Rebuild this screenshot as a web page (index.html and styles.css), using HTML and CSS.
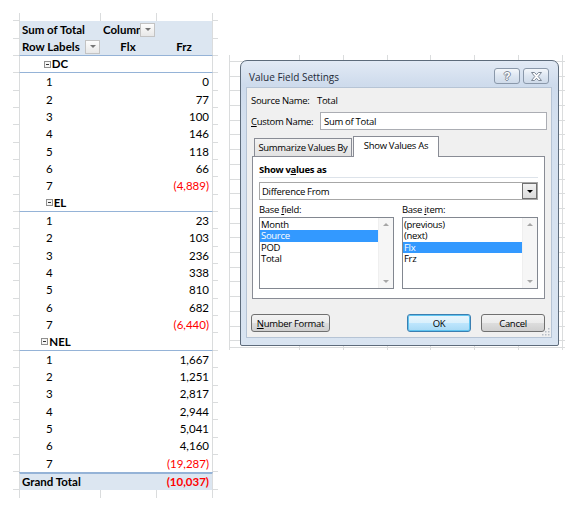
FILE: index.html
```html
<!DOCTYPE html>
<html lang="en">
<head>
<meta charset="utf-8">
<title>Value Field Settings</title>
<link rel="stylesheet" href="styles.css">
</head>
<body>
<section class="sheet">
  <div class="r edge"><span></span><span></span><span></span></div>
  <div class="r hd"><span class="lab b">Sum of Total</span><span class="colhd b"><em>Column Labels</em><i class="dd"></i></span><span></span></div>
  <div class="r hd hd2"><span class="lab b">Row Labels<i class="dd"></i></span><span class="ctr b">Flx</span><span class="ctr b">Frz</span></div>
  <div class="r sec"><span class="grp b"><i class="mn"></i>DC</span><span></span><span></span></div>
  <div class="r"><span class="it">1</span><span></span><span class="v">0</span></div>
  <div class="r"><span class="it">2</span><span></span><span class="v">77</span></div>
  <div class="r"><span class="it">3</span><span></span><span class="v">100</span></div>
  <div class="r"><span class="it">4</span><span></span><span class="v">146</span></div>
  <div class="r"><span class="it">5</span><span></span><span class="v">118</span></div>
  <div class="r"><span class="it">6</span><span></span><span class="v">66</span></div>
  <div class="r"><span class="it">7</span><span></span><span class="v neg">(4,889)</span></div>
  <div class="r sec"><span class="grp b"><i class="mn"></i>EL</span><span></span><span></span></div>
  <div class="r"><span class="it">1</span><span></span><span class="v">23</span></div>
  <div class="r"><span class="it">2</span><span></span><span class="v">103</span></div>
  <div class="r"><span class="it">3</span><span></span><span class="v">236</span></div>
  <div class="r"><span class="it">4</span><span></span><span class="v">338</span></div>
  <div class="r"><span class="it">5</span><span></span><span class="v">810</span></div>
  <div class="r"><span class="it">6</span><span></span><span class="v">682</span></div>
  <div class="r"><span class="it">7</span><span></span><span class="v neg">(6,440)</span></div>
  <div class="r sec"><span class="grp b"><i class="mn"></i>NEL</span><span></span><span></span></div>
  <div class="r"><span class="it">1</span><span></span><span class="v">1,667</span></div>
  <div class="r"><span class="it">2</span><span></span><span class="v">1,251</span></div>
  <div class="r"><span class="it">3</span><span></span><span class="v">2,817</span></div>
  <div class="r"><span class="it">4</span><span></span><span class="v">2,944</span></div>
  <div class="r"><span class="it">5</span><span></span><span class="v">5,041</span></div>
  <div class="r"><span class="it">6</span><span></span><span class="v">4,160</span></div>
  <div class="r"><span class="it">7</span><span></span><span class="v neg">(19,287)</span></div>
  <div class="r gt"><span class="lab">Grand Total</span><span></span><span class="v neg">(10,037)</span></div>
  <div class="r edge bottom"><span></span><span></span><span></span></div>
</section>

<section class="desk">
  <div class="dialog">
    <div class="titlebar">
      <span class="title">Value Field Settings</span>
      <span class="caps">
        <span class="cap help">?</span>
        <span class="cap close"><svg width="11" height="9" viewBox="0 0 11 9"><path d="M0.5 0.5h3l2 2.2 2-2.2h3l-3.3 4 3.3 4h-3l-2-2.2-2 2.2h-3l3.3-4z" fill="#fff" stroke="#7d8896" stroke-width="1"/></svg></span>
      </span>
    </div>
    <div class="client">
      <div class="line"><span class="flabel">Source Name:</span><span>Total</span></div>
      <div class="line custom"><span class="flabel wide"><u>C</u>ustom Name:</span><span class="textbox">Sum of Total</span></div>
      <div class="tabs"><span class="tab">Summarize Values By</span><span class="tab on">Show Values As</span></div>
      <div class="panel">
        <div class="gtitle">Show v<u>a</u>lues as</div>
        <div class="combo"><span>Difference From</span><span class="cbtn"></span></div>
        <div class="lists">
          <div class="lcol">
            <div class="llabel">Base <u>f</u>ield:</div>
            <div class="listbox">
              <ul><li>Month</li><li class="sel">Source</li><li>POD</li><li>Total</li></ul>
              <div class="sb"><i class="up"></i><i class="down"></i></div>
            </div>
          </div>
          <div class="lcol right">
            <div class="llabel">Base <u>i</u>tem:</div>
            <div class="listbox">
              <ul><li>(previous)</li><li>(next)</li><li class="sel">Flx</li><li>Frz</li></ul>
              <div class="sb"><i class="up"></i><i class="down"></i></div>
            </div>
          </div>
        </div>
      </div>
      <div class="btns">
        <span class="btn nf"><u>N</u>umber Format</span>
        <span class="btn ok">OK</span>
        <span class="btn">Cancel</span>
      </div>
      <svg class="grip" width="9" height="9" viewBox="0 0 9 9"><g fill="#b8bec6"><rect x="7" y="1" width="1.5" height="1.5"/><rect x="4" y="4" width="1.5" height="1.5"/><rect x="7" y="4" width="1.5" height="1.5"/><rect x="1" y="7" width="1.5" height="1.5"/><rect x="4" y="7" width="1.5" height="1.5"/><rect x="7" y="7" width="1.5" height="1.5"/></g></svg>
    </div>
  </div>
</section>
</body>
</html>
```

FILE: styles.css
```css
* { box-sizing: border-box; margin: 0; padding: 0; }
html, body { width: 578px; height: 509px; overflow: hidden; background: #fff; }
body { display: flex; align-items: flex-start; }

/* ---------- pivot sheet ---------- */
.sheet {
  margin: 13px 0 0 13px;
  width: 205px;
  font: 11.5px/1 Lato, "Liberation Sans", sans-serif;
  color: #000;
}
.r {
  display: grid;
  grid-template-columns: 6px 81px 56px 57px 5px;
  height: 17.35px;
}
.r::before, .r::after { content: ""; border-bottom: 1px solid #dadcdd; }
.r > span {
  display: flex;
  align-items: center;
  white-space: nowrap;
  overflow: hidden;
  min-width: 0;
}
.r > span:first-of-type { border-left: 1px solid #dadcdd; }
.r > span:last-of-type { border-right: 1px solid #dadcdd; }
.r.edge { height: 8.3px; }
.r.edge > span { border-left: 1px solid #dadcdd; }
.r.edge.bottom { height: 8px; }
.r.edge.bottom::before, .r.edge.bottom::after { border-bottom: 0; }

.b { font-weight: 700; }
.hd > span { background: #dce6f1; }
.hd2 > span { border-bottom: 1px solid #95b3d7; }
.lab { padding-left: 2px; }
.lab .dd { margin-left: auto; }
.colhd { padding-left: 3px; }
.colhd em { font-style: normal; overflow: hidden; flex: 1; min-width: 0; }
.colhd .dd { margin-right: 1px; }
.ctr { justify-content: center; }
.dd {
  flex: none;
  width: 15px;
  height: 14px;
  border: 1px solid #c3c3c3;
  background: linear-gradient(#fdfdfd, #e8e8e8);
  display: flex;
  align-items: center;
  justify-content: center;
}
.dd::after {
  content: "";
  border-top: 3px solid #767676;
  border-left: 3px solid transparent;
  border-right: 3px solid transparent;
}
.sec > span { border-bottom: 1px solid #95b3d7; }
.grp { justify-content: center; padding-right: 8px; }
.mn {
  width: 7px;
  height: 7px;
  margin-right: 1px;
  border: 1px solid #8f8f8f;
  background: #f6f6f6;
  display: flex;
  align-items: center;
  justify-content: center;
}
.mn::after { content: ""; width: 3px; height: 1px; background: #333; }
.it { padding-left: 26px; }
.v { justify-content: flex-end; padding-right: 3px; }
.neg { color: #ff0000; }
.gt > span { background: #dce6f1; border-top: 2px solid #95b3d7; font-weight: 700; }

/* ---------- background grid + dialog ---------- */
.desk {
  margin: 55px 0 0 10px;
  width: 337px;
  height: 296px;
  padding: 5px 0 0 12px;
  background-color: #fff;
  background-image:
    repeating-linear-gradient(to right, #dadcdd 0 1px, transparent 1px 43.83px),
    linear-gradient(#dadcdd, #dadcdd),
    repeating-linear-gradient(to bottom, #dadcdd 0 1px, transparent 1px 14.7px),
    linear-gradient(#dadcdd, #dadcdd);
  background-size: 266px 295px, 1px 295px, 336px 287px, 336px 1px;
  background-position: 71px 0, 1px 0, 1px 6px, 1px 292px;
  background-repeat: no-repeat;
}
.dialog {
  width: 319px;
  height: 286px;
  border: 1px solid #5d6b7b;
  border-radius: 7px 7px 2px 2px;
  background: linear-gradient(#e2eaf5, #cedbec 24px, #d4e0ef 60px, #d9e4f1);
  padding: 0 6px 7px 5px;
  display: flex;
  flex-direction: column;
  font: 9.5px/13px "Open Sans", "Liberation Sans", sans-serif;
  letter-spacing: -0.3px;
  color: #000;
}
.titlebar {
  height: 26px;
  flex: none;
  display: flex;
  align-items: flex-start;
  justify-content: space-between;
  padding: 0 3px;
}
.title { margin-top: 9px; font-size: 10px; line-height: 14px; letter-spacing: 0; color: #1e2a38; }
.caps { display: flex; gap: 3px; margin-top: 7px; }
.cap {
  width: 26px;
  height: 16px;
  border: 1px solid #8a98aa;
  border-radius: 3px;
  background: linear-gradient(#f4f7fb, #dde6f1 50%, #cfdbea);
  display: flex;
  align-items: center;
  justify-content: center;
}
.help {
  font: 700 11px/1 "Liberation Sans", sans-serif;
  color: #fff;
  text-shadow: 1px 0 0 #7d8896, -1px 0 0 #7d8896, 0 1px 0 #7d8896, 0 -1px 0 #7d8896;
}
.client {
  position: relative;
  flex: 1;
  background: #f0f0f0;
  border: 1px solid #b6c4d5;
  padding: 6px 0 0 4px;
  display: flex;
  flex-direction: column;
}
.line { display: flex; align-items: center; height: 13px; }
.flabel { width: 66px; flex: none; }
.flabel.wide { width: 69px; }
.custom { margin-top: 5px; height: 18px; }
.textbox {
  width: 227px;
  height: 18px;
  border: 1px solid #abadb3;
  background: #fff;
  padding-left: 3px;
  display: flex;
  align-items: center;
}
.tabs {
  margin-top: 6px;
  height: 20px;
  padding-left: 3px;
  display: flex;
  align-items: flex-end;
}
.tab {
  height: 18px;
  width: 98px;
  margin-right: 1px;
  border: 1px solid #898c95;
  border-bottom: 0;
  background: linear-gradient(#f3f3f3, #e2e2e2);
  display: flex;
  align-items: center;
  justify-content: center;
}
.tab.on {
  position: relative;
  z-index: 1;
  width: 86px;
  height: 21px;
  margin-bottom: -1px;
  background: #fff;
  padding-bottom: 3px;
}
.panel {
  margin-left: 1px;
  width: 293px;
  height: 143px;
  border: 1px solid #898c95;
  background: #fff;
  padding: 6px 6px 0 6px;
}
.gtitle {
  font-weight: 700;
  line-height: 13px;
  padding-bottom: 1px;
  border-bottom: 1px solid #dde3ea;
}
.combo {
  margin-top: 4px;
  height: 18px;
  border: 1px solid #a7a7a7;
  background: #fff;
  display: flex;
  align-items: center;
  justify-content: space-between;
  padding-left: 2px;
}
.cbtn {
  width: 15px;
  height: 16px;
  border: 1px solid #707070;
  background: linear-gradient(#f2f2f2, #dcdcdc);
  display: flex;
  align-items: center;
  justify-content: center;
}
.cbtn::after {
  content: "";
  border-top: 3px solid #000;
  border-left: 3px solid transparent;
  border-right: 3px solid transparent;
}
.lists { display: flex; gap: 8px; margin-top: 3px; }
.lcol { width: 135px; }
.lcol.right { width: 136px; }
.llabel { line-height: 13px; margin-bottom: 1px; }
.listbox {
  height: 72px;
  border: 1px solid #828790;
  background: #fff;
  display: flex;
}
.listbox ul { list-style: none; flex: 1; padding-top: 1px; }
.listbox li { height: 11.3px; line-height: 11.3px; padding-left: 1px; }
.listbox li.sel { background: #3399ff; color: #fff; }
.sb {
  width: 15px;
  background: #f6f6f6;
  border-left: 1px solid #efefef;
  display: flex;
  flex-direction: column;
  justify-content: space-between;
  align-items: center;
  padding: 5px 0;
}
.sb .up { border-bottom: 3px solid #a6a6a6; border-left: 3px solid transparent; border-right: 3px solid transparent; }
.sb .down { border-top: 3px solid #a6a6a6; border-left: 3px solid transparent; border-right: 3px solid transparent; }
.btns {
  margin-top: 15px;
  display: flex;
  gap: 10px;
  padding-right: 6px;
}
.btn {
  height: 18px;
  width: 64px;
  border: 1px solid #707070;
  border-radius: 3px;
  background: linear-gradient(#f3f3f3, #ebebeb 50%, #dddddd 51%, #cfcfcf);
  display: flex;
  align-items: center;
  justify-content: center;
}
.btn.nf { width: 79px; margin-right: auto; }
.btn.ok {
  border-color: #3c7fb1;
  box-shadow: inset 0 0 0 1px #5fc4f0;
  background: linear-gradient(#eaf6fd, #d9f0fc 50%, #bee6fd 51%, #a7d9f5);
}
.grip { position: absolute; right: 1px; bottom: 1px; }
```
